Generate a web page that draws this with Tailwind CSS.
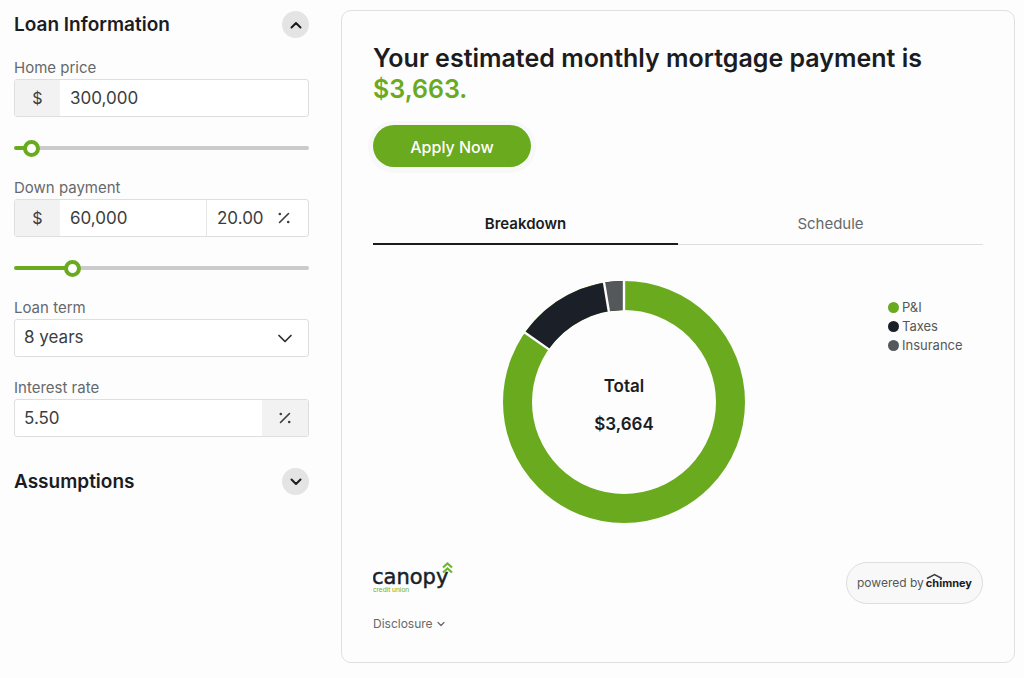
<!DOCTYPE html>
<html lang="en">
<head>
<meta charset="utf-8">
<meta name="viewport" content="width=device-width, initial-scale=1">
<title>Mortgage Calculator</title>
<script src="https://cdn.jsdelivr.net/npm/@tailwindcss/browser@4"></script>
</head>
<body class="min-h-screen bg-[#fdfdfd] font-['Inter',sans-serif] text-[#1b1c1f]">
<svg class="hidden" aria-hidden="true">
  <symbol id="percent" viewBox="0 0 12 12">
    <path d="M1.500 10.500 10.500 1.500" stroke="currentColor" stroke-width="1.600" stroke-linecap="round"/>
    <circle cx="1.800" cy="2" r="1.300" fill="currentColor"/><circle cx="10.200" cy="10" r="1.300" fill="currentColor"/>
  </symbol>
</svg>
<main class="flex items-start gap-8 pt-[10px] pr-[9px] pb-[15px] pl-[14px]">
  <form class="w-[295px] shrink-0 pt-px">
    <div class="flex h-[27px] items-center justify-between">
      <h2 class="text-[19px] leading-6 font-semibold">Loan Information</h2>
      <button type="button" aria-label="Collapse loan information" class="grid size-[27px] place-items-center rounded-full bg-[#e4e4e4]">
        <svg width="12" height="8" viewBox="0 0 12 8" fill="none" stroke="#1b1c1f" stroke-width="2" stroke-linecap="round" stroke-linejoin="round"><path d="M1.500 6.500 6 2l4.500 4.500"/></svg>
      </button>
    </div>

    <div class="mt-5 flex flex-col gap-5">
      <div class="pb-px">
        <label for="price" class="mb-px block text-[15px] leading-5 text-[#66696b]">Home price</label>
        <div class="flex h-[38px] overflow-hidden rounded-[3px] border border-[#dedede] bg-white">
          <span class="grid w-[45px] shrink-0 place-items-center bg-[#f2f2f2] text-[16px] text-[#3b3d40]">$</span>
          <input id="price" type="text" value="300,000" class="w-full min-w-0 px-[10px] pt-px text-[17px] text-[#3b3d40] outline-none">
        </div>
      </div>
      <input type="range" aria-label="Home price" min="0" max="1000" value="32" class="block h-5 w-full appearance-none bg-transparent [&::-webkit-slider-runnable-track]:h-1 [&::-webkit-slider-runnable-track]:rounded-full [&::-webkit-slider-runnable-track]:bg-[linear-gradient(to_right,#6aaa1e_6%,#cbcbcb_6%)] [&::-webkit-slider-thumb]:-mt-[6px] [&::-webkit-slider-thumb]:size-[17px] [&::-webkit-slider-thumb]:appearance-none [&::-webkit-slider-thumb]:rounded-full [&::-webkit-slider-thumb]:border-4 [&::-webkit-slider-thumb]:border-[#6aaa1e] [&::-webkit-slider-thumb]:bg-white">
      <div class="pb-px">
        <label for="down" class="mb-px block text-[15px] leading-5 text-[#66696b]">Down payment</label>
        <div class="flex h-[38px] overflow-hidden rounded-[3px] border border-[#dedede] bg-white">
          <span class="grid w-[45px] shrink-0 place-items-center bg-[#f2f2f2] text-[16px] text-[#3b3d40]">$</span>
          <input id="down" type="text" value="60,000" class="w-full min-w-0 flex-1 px-[10px] pt-px text-[17px] text-[#3b3d40] outline-none">
          <input type="text" aria-label="Down payment percent" value="20.00" class="w-[68px] border-l border-[#e6e6e6] pt-px pl-[10px] text-[17px] text-[#3b3d40] outline-none">
          <span class="flex w-[34px] items-center pl-[4px] text-[#3b3d40]"><svg width="12" height="12"><use href="#percent"/></svg></span>
        </div>
      </div>
      <input type="range" aria-label="Down payment" min="0" max="1000" value="180" class="block h-5 w-full appearance-none bg-transparent [&::-webkit-slider-runnable-track]:h-1 [&::-webkit-slider-runnable-track]:rounded-full [&::-webkit-slider-runnable-track]:bg-[linear-gradient(to_right,#6aaa1e_20%,#cbcbcb_20%)] [&::-webkit-slider-thumb]:-mt-[6px] [&::-webkit-slider-thumb]:size-[17px] [&::-webkit-slider-thumb]:appearance-none [&::-webkit-slider-thumb]:rounded-full [&::-webkit-slider-thumb]:border-4 [&::-webkit-slider-thumb]:border-[#6aaa1e] [&::-webkit-slider-thumb]:bg-white">
      <div class="pb-px">
        <label for="term" class="mb-px block text-[15px] leading-5 text-[#66696b]">Loan term</label>
        <div class="relative">
          <select id="term" class="block h-[38px] w-full appearance-none rounded-[3px] border border-[#dedede] bg-white px-[9px] text-[17px] text-[#3b3d40] outline-none">
            <option>8 years</option><option>15 years</option><option>30 years</option>
          </select>
          <svg class="pointer-events-none absolute top-[15px] right-[16px]" width="16" height="10" viewBox="0 0 16 10" fill="none" stroke="#2b2d30" stroke-width="1.700" stroke-linecap="round" stroke-linejoin="round"><path d="M2 1.500 8 7.500l6-6"/></svg>
        </div>
      </div>
      <div class="pb-px">
        <label for="rate" class="mb-px block text-[15px] leading-5 text-[#66696b]">Interest rate</label>
        <div class="flex h-[38px] overflow-hidden rounded-[3px] border border-[#dedede] bg-white">
          <input id="rate" type="text" value="5.50" class="w-full min-w-0 px-[9px] pt-px text-[17px] text-[#3b3d40] outline-none">
          <span class="grid w-[46px] shrink-0 place-items-center bg-[#f2f2f2] text-[#3b3d40]"><svg width="12" height="12"><use href="#percent"/></svg></span>
        </div>
      </div>
    </div>

    <div class="mt-[30px] flex h-[27px] items-center justify-between">
      <h2 class="text-[19px] leading-6 font-semibold">Assumptions</h2>
      <button type="button" aria-label="Expand assumptions" class="grid size-[27px] place-items-center rounded-full bg-[#e4e4e4]">
        <svg width="12" height="8" viewBox="0 0 12 8" fill="none" stroke="#1b1c1f" stroke-width="2" stroke-linecap="round" stroke-linejoin="round"><path d="M1.500 1.500 6 6l4.500-4.500"/></svg>
      </button>
    </div>
  </form>

  <section class="min-w-0 flex-1 rounded-[10px] border border-[#e0e0e0] px-[31px] pt-8 pb-7">
    <h1 class="text-[25px] leading-[31px] font-semibold">Your estimated monthly mortgage payment is <span class="block text-[#6aaa1e]">$3,663.</span></h1>
    <button type="button" class="mt-5 block h-[42px] w-[158px] rounded-full bg-[#6aaa1e] pt-[2px] text-[16px] font-medium text-white shadow-[0_1px_0_5px_#f8f8f8]">Apply Now</button>

    <div role="tablist" class="mt-9 grid h-[42px] grid-cols-2 text-[15px]">
      <button type="button" role="tab" aria-selected="true" class="border-b-2 border-[#1b1c1f] pt-[2px] font-semibold">Breakdown</button>
      <button type="button" role="tab" aria-selected="false" class="border-b border-[#dedede] pt-[2px] text-[#66696b]">Schedule</button>
    </div>

    <div class="mt-9 flex gap-[13px]">
      <div class="grid flex-1 place-items-center">
        <svg class="col-start-1 row-start-1" width="242" height="242" viewBox="-121 -121 242 242" fill="none" role="img" aria-label="Payment breakdown">
          <g stroke-width="29">
            <circle r="106.500" stroke="#6aaa1e"/>
            <path d="M0-106.500A106.500 106.500 0 0 0-87.240-61.090" stroke="#1b1f28"/>
            <path d="M0-106.500A106.500 106.500 0 0 0-17.580-105.040" stroke="#55585a"/>
          </g>
          <g stroke="#fdfdfd" stroke-width="2.400">
            <path d="M0-90V-122"/>
            <path d="M0-90V-122" transform="rotate(-55)"/>
            <path d="M0-90V-122" transform="rotate(-9.500)"/>
          </g>
        </svg>
        <div class="col-start-1 row-start-1 flex flex-col gap-[14px] pt-[6px] text-center text-[17px] leading-6 font-semibold">
          <p>Total</p>
          <p>$3,664</p>
        </div>
      </div>
      <ul class="mt-[17px] w-[95px] text-[13px] leading-[19px] text-[#55585a]">
        <li class="flex items-center gap-[3px]"><span class="size-[11px] shrink-0 rounded-full bg-[#6aaa1e]"></span>P&amp;I</li>
        <li class="flex items-center gap-[3px]"><span class="size-[11px] shrink-0 rounded-full bg-[#1b1f28]"></span>Taxes</li>
        <li class="flex items-center gap-[3px]"><span class="size-[11px] shrink-0 rounded-full bg-[#55585a]"></span>Insurance</li>
      </ul>
    </div>

    <footer class="mt-[39px]">
      <div class="flex items-start justify-between">
        <svg width="82" height="32" viewBox="0 0 82 32" role="img" aria-label="Canopy credit union">
          <text x="-1" y="22" font-family="DejaVu Sans" font-size="21" fill="#1b1f28" stroke="#1b1f28" stroke-width=".5">canopy</text>
          <text x="0" y="30" font-family="Liberation Sans" font-size="7" fill="#6fb52c">credit union</text>
          <path d="M70 5.500 74.500 1.500 79 5.500M70 10.500 74.500 6.500 79 10.500" fill="none" stroke="#6fb52c" stroke-width="2.200"/>
        </svg>
        <a href="#" class="flex h-[42px] w-[137px] items-center justify-center gap-[2px] rounded-full border border-[#dedede] bg-[#f8f8f8] text-[12px] text-[#55585a]">
          <span>powered by</span>
          <span class="relative text-[11px] font-bold text-[#1b1c1f]">chimney
            <svg class="absolute -top-[2px] left-0" width="18" height="7" viewBox="0 0 18 7" fill="none" stroke="#3b3d40" stroke-width="1.500"><path d="M1 5.500 8.500 1.500 16 5.500"/></svg>
          </span>
        </a>
      </div>
      <button type="button" class="mt-[10px] flex items-center gap-1 text-[12px] leading-5 text-[#66696b]">Disclosure
        <svg width="8" height="6" viewBox="0 0 8 6" fill="none" stroke="currentColor" stroke-width="1.200" stroke-linecap="round" stroke-linejoin="round"><path d="M1 1.500 4 4.500l3-3"/></svg>
      </button>
    </footer>
  </section>
</main>
</body>
</html>
